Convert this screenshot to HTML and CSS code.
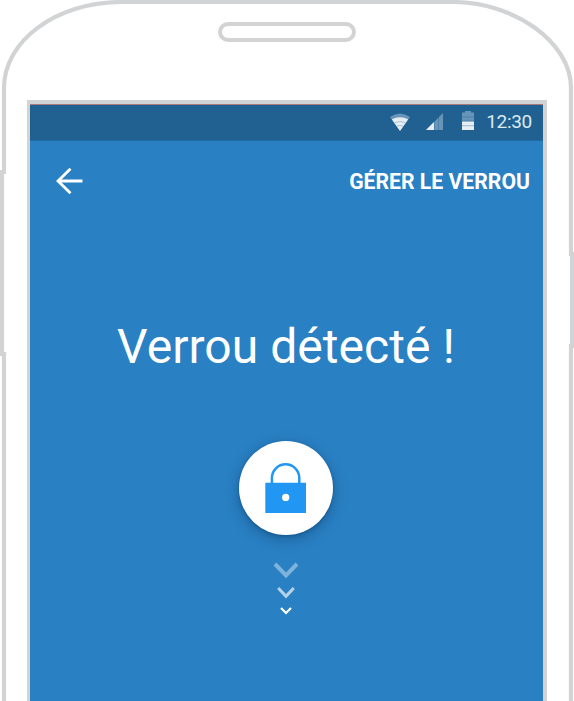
FILE: index.html
```
<!DOCTYPE html>
<html lang="fr">
<head>
<meta charset="utf-8">
<title>Verrou détecté</title>
<link rel="stylesheet" href="styles.css">
</head>
<body>
<main class="device">
  <svg class="outline" viewBox="0 0 574 701" aria-hidden="true">
    <path d="M4 704V354H2V172H4V88C4 41 56 2 122 2H453C514 2 571 42 571 88V254H572V346H571V704"/>
  </svg>
  <div class="speaker"></div>
  <section class="screen">
    <div class="status">
      <svg class="wifi" viewBox="0 0 20 18" aria-hidden="true">
        <path class="dim" d="M0 4Q10-3 20 4L10 18Z"/>
        <path class="lit" d="M1.8 6.3Q10 2 18.2 6.3L10 18Z"/>
        <path class="wave" d="M5 9.5Q10 7.5 15 9.5M7 13Q10 11.8 13 13"/>
      </svg>
      <svg class="signal" viewBox="0 0 17 17" aria-hidden="true">
        <path class="dim" d="M17 0V17H0Z"/>
        <path class="lit" d="M8 9V17H0Z"/>
        <path class="bars" d="M8.5 8V17M12.5 4V17"/>
      </svg>
      <svg class="battery" viewBox="0 0 12 19" aria-hidden="true">
        <path class="dim" d="M3 0H9V1.5H12V10H0V1.5H3Z"/>
        <path class="lit" d="M0 10.3H12V19H0Z"/>
        <path class="bars" d="M0 6H12M0 10H12M0 14.7H12"/>
      </svg>
      <time>12:30</time>
    </div>
    <header class="toolbar">
      <svg class="back" viewBox="0 0 28 28" aria-label="Retour">
        <path d="M26.5 14H2M14.5 1.8L2 14L14.5 26.2"/>
      </svg>
      <span class="manage">GÉRER LE VERROU</span>
    </header>
    <h1>Verrou détecté !</h1>
    <div class="badge">
      <svg class="lock" viewBox="0 0 42 52" aria-hidden="true">
        <path class="shackle" d="M6.9 22V16A13.7 13.7 0 0 1 34.3 16V22"/>
        <path class="body" d="M.3 20.8H41V51H.3Z"/>
        <circle cx="20.7" cy="35.4" r="3.6"/>
      </svg>
    </div>
    <svg class="chevrons" viewBox="0 0 26 54" aria-hidden="true">
      <path class="large" d="M2 2L13 13.3L24 2"/>
      <path class="medium" d="M5.2 26L13 34.2L20.8 26"/>
      <path class="small" d="M8 46L13 51L18 46"/>
    </svg>
  </section>
</main>
</body>
</html>
```
FILE: styles.css
```
* { box-sizing: border-box; }
html { overflow: hidden; }
body { margin: 0; background: #fff; font-family: Roboto, "Liberation Sans", sans-serif; }
.device { position: relative; width: 574px; height: 701px; padding-top: 22px; overflow: hidden; }
.outline { position: absolute; inset: 0; width: 574px; height: 701px; fill: none; stroke: #d1d3d4; stroke-width: 4.2; }
.speaker { width: 138px; height: 20px; margin-left: 218px; border: 4.5px solid #d1d3d4; border-radius: 10px; }
.screen { display: flex; flex-direction: column; align-items: center; width: 520px; height: 610px; margin: 58px 0 0 27px; border: solid #d1d3d4; border-width: 4px 4px 0 3px; background: #2980c3; color: #fff; }
.status { display: flex; align-items: center; width: 100%; height: 37px; flex: none; padding: 0 11px 2px 0; justify-content: flex-end; border-top: 1px solid #a97c7b; border-bottom: 1px solid #22699f; background: #206192; }
.dim { fill: #6795b8; }
.lit { fill: #e6eef4; }
.wave, .bars { fill: none; stroke: #9bbad1; stroke-width: .8; }
.bars { stroke: #206192; stroke-opacity: .45; }
.wifi { width: 20px; height: 18px; margin-right: 16px; }
.signal { width: 17px; height: 17px; margin: 0 19px 0 0; }
.battery { width: 12px; height: 19px; margin: -2px 12px 0 0; }
time { font-size: 19px; line-height: 22px; letter-spacing: -.3px; color: #dde9f1; }
.toolbar { display: flex; align-items: center; justify-content: space-between; width: 100%; height: 80px; flex: none; padding: 0 13px 0 26px; }
.back { width: 28px; height: 28px; fill: none; stroke: #fff; stroke-width: 2.8; }
.manage { font-size: 21.2px; line-height: 25px; font-weight: 700; }
h1 { margin: 98px 1px 0 0; font-size: 48px; line-height: 56px; font-weight: 400; letter-spacing: .05px; white-space: nowrap; }
.badge { display: flex; justify-content: center; width: 94px; height: 94px; flex: none; margin-top: 66px; margin-right: 2px; padding-top: 21px; border-radius: 50%; background: #fff; box-shadow: 0 4px 14px rgba(0, 40, 80, .36), 0 1px 3px rgba(0, 40, 80, .3); }
.lock { width: 42px; height: 52px; }
.shackle { fill: none; stroke: #2196f3; stroke-width: 2.5; }
.body { fill: #2196f3; }
.lock circle { fill: #fff; }
.chevrons { width: 26px; height: 54px; flex: none; margin: 27px 2px 0 0; fill: none; stroke: #fff; }
.large { stroke-width: 4; opacity: .4; }
.medium { stroke-width: 3.1; opacity: .65; }
.small { stroke-width: 2.2; }
```
